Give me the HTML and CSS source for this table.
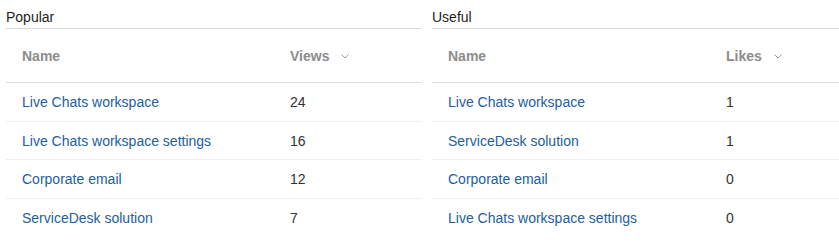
FILE: index.html
```html
<!DOCTYPE html>
<html>
<head>
<meta charset="utf-8">
<link rel="stylesheet" href="styles.css">
</head>
<body>
<div class="page">
  <section class="panel panel-left">
    <div class="title">Popular</div>
    <div class="row head">
      <div class="c-name">Name</div>
      <div class="c-val">Views <svg class="chev" width="8" height="5" viewBox="0 0 8 5"><polyline points="0.5,0.5 4,4 7.5,0.5" fill="none" stroke="#9a9a9a" stroke-width="1"/></svg></div>
    </div>
    <div class="row"><div class="c-name link">Live Chats workspace</div><div class="c-val">24</div></div>
    <div class="row"><div class="c-name link">Live Chats workspace settings</div><div class="c-val">16</div></div>
    <div class="row"><div class="c-name link">Corporate email</div><div class="c-val">12</div></div>
    <div class="row last"><div class="c-name link">ServiceDesk solution</div><div class="c-val">7</div></div>
  </section>
  <section class="panel panel-right">
    <div class="title">Useful</div>
    <div class="row head">
      <div class="c-name">Name</div>
      <div class="c-val">Likes <svg class="chev" width="8" height="5" viewBox="0 0 8 5"><polyline points="0.5,0.5 4,4 7.5,0.5" fill="none" stroke="#9a9a9a" stroke-width="1"/></svg></div>
    </div>
    <div class="row"><div class="c-name link">Live Chats workspace</div><div class="c-val">1</div></div>
    <div class="row"><div class="c-name link">ServiceDesk solution</div><div class="c-val">1</div></div>
    <div class="row"><div class="c-name link">Corporate email</div><div class="c-val">0</div></div>
    <div class="row last"><div class="c-name link">Live Chats workspace settings</div><div class="c-val">0</div></div>
  </section>
</div>
</body>
</html>
```
FILE: styles.css
```css
html, body {
  margin: 0;
  padding: 0;
  background: #ffffff;
}
body {
  font-family: "Liberation Sans", Arial, sans-serif;
  font-size: 14px;
  line-height: 16px;
  color: #333333;
}
.page {
  display: flex;
  gap: 11px;
  padding-left: 6px;
}
.panel-left { width: 415px; flex: none; }
.panel-right { flex: 1; min-width: 0; }
.panel-left .c-name { width: 268px; }
.panel-right .c-name { width: 278px; }

.title {
  padding: 9px 0 3px 0;
  border-bottom: 1px solid #d8d8d8;
  color: #1e1e1e;
}
.row {
  display: flex;
  padding: 11px 0 10.5px 16px;
  border-bottom: 1px solid #eeeeee;
}
.row.last { border-bottom: none; }
.row.head {
  padding-top: 19px;
  padding-bottom: 18px;
  border-bottom: 1px solid #dcdcdc;
  font-weight: bold;
  color: #8c8c8c;
}
.c-name { flex: none; }
.c-val {
  display: flex;
  align-items: center;
  gap: 12px;
}
.link { color: #22609e; }
.chev { display: block; margin-top: 1px; }
```
